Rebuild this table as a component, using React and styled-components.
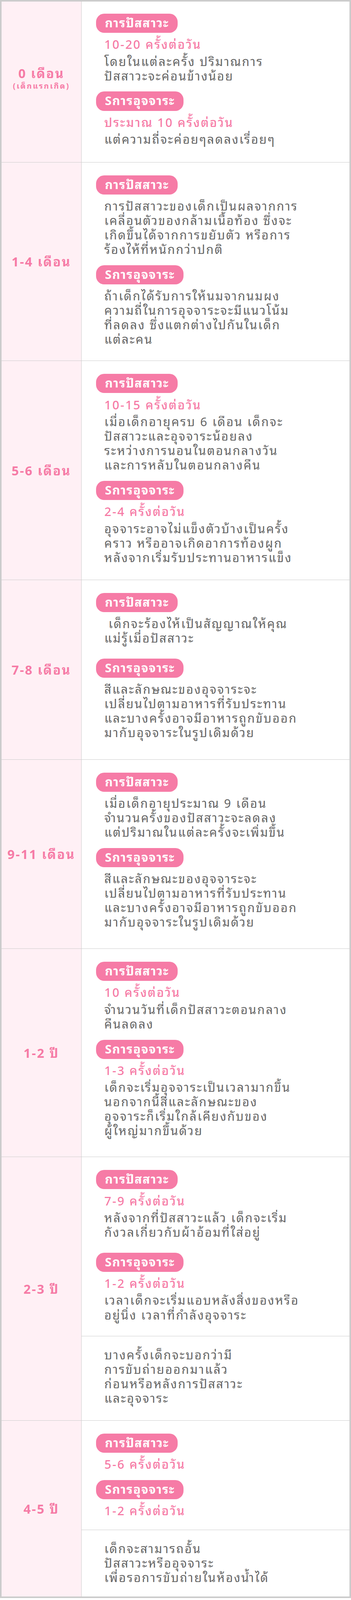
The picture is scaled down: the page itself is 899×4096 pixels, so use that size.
import React from "react";
import styled, { createGlobalStyle } from "styled-components";

// reference was laid out at 1280px, the page is drawn at 0.702 of that
const u = (n) => `${+(n * 0.702).toFixed(2)}px`;

const PINK = "#f67ba6";
const GREY_TEXT = "#666666";
const LINE = "#cccccc";

const GlobalStyle = createGlobalStyle`
  html, body {
    margin: 0;
    padding: 0;
    background: #fff;
  }
  body {
    font-family: "Noto Sans", "Noto Sans Thai Looped", sans-serif;
    letter-spacing: ${u(4)};
  }
`;

const Table = styled.div`
  border: ${u(6)} solid ${LINE};
  background: #fff;
`;

const Row = styled.div`
  display: grid;
  grid-template-columns: ${u(292)} 1fr;

  & + & {
    border-top: ${u(2)} solid ${LINE};
  }
`;

const Age = styled.div`
  background: #fff0f5;
  border-right: 1px solid ${LINE};
  display: flex;
  flex-direction: column;
  align-items: center;
  justify-content: center;
  color: ${PINK};
  font-weight: 700;
  text-align: center;
`;

const AgeMain = styled.div`
  font-size: ${u(46)};
  line-height: 1.2;
`;

const AgeSub = styled.div`
  font-size: ${u(28)};
  line-height: 1.2;
  margin: ${u(2)} 0 ${u(28)};
`;

const Cells = styled.div`
  display: flex;
  flex-direction: column;
`;

const Cell = styled.div`
  padding: ${({ $pt }) => u($pt)} ${u(40)} ${({ $pb }) => u($pb)} ${u(53)};

  & + & {
    border-top: ${u(2)} solid ${LINE};
  }
`;

const Section = styled.div`
  display: flex;
  flex-direction: column;
  align-items: flex-start;
  margin-top: ${({ $gap }) => u($gap)};
`;

const Badge = styled.div`
  height: ${u(70)};
  line-height: ${u(66)};
  padding: 0 ${u(32)};
  border-radius: ${u(30)};
  background: ${PINK};
  color: #fff;
  font-size: ${u(44)};
  font-weight: 700;
  letter-spacing: ${u(2.5)};
  white-space: nowrap;
`;

const Body = styled.div`
  margin: ${u(16)} 0 0 ${u(30)};
`;

const Count = styled.div`
  color: ${PINK};
  font-size: ${u(44)};
  font-weight: 500;
  line-height: 1.2;
  white-space: nowrap;
`;

const Note = styled.p`
  margin: 0;
  color: ${GREY_TEXT};
  font-size: ${u(44)};
  line-height: 1.2;
  white-space: nowrap;

  ${Count} + & {
    margin-top: ${u(9)};
  }
`;

const PEE = "การปัสสาวะ";
const POO = "Sการอุจจาระ";

const stoolColour = [
  "สีและลักษณะของอุจจาระจะ",
  "เปลี่ยนไปตามอาหารที่รับประทาน",
  "และบางครั้งอาจมีอาหารถูกขับออก",
  "มากับอุจจาระในรูปเดิมด้วย",
];

const rows = [
  {
    age: "0 เดือน",
    sub: "(เด็กแรกเกิด)",
    cells: [
      {
        pt: 44,
        pb: 56,
        sections: [
          {
            badge: PEE,
            count: "10-20 ครั้งต่อวัน",
            lines: ["โดยในแต่ละครั้ง ปริมาณการ", "ปัสสาวะจะค่อนข้างน้อย"],
          },
          {
            badge: POO,
            count: "ประมาณ 10 ครั้งต่อวัน",
            lines: ["แต่ความถี่จะค่อยๆลดลงเรื่อยๆ"],
          },
        ],
      },
    ],
  },
  {
    age: "1-4 เดือน",
    cells: [
      {
        pb: 51,
        sections: [
          {
            badge: PEE,
            lines: [
              "การปัสสาวะของเด็กเป็นผลจากการ",
              "เคลื่อนตัวของกล้ามเนื้อท้อง ซึ่งจะ",
              "เกิดขึ้นได้จากการขยับตัว หรือการ",
              "ร้องไห้ที่หนักกว่าปกติ",
            ],
          },
          {
            badge: POO,
            lines: [
              "ถ้าเด็กได้รับการให้นมจากนมผง",
              "ความถี่ในการอุจจาระจะมีแนวโน้ม",
              "ที่ลดลง ซึ่งแตกต่างไปกันในเด็ก",
              "แต่ละคน",
            ],
          },
        ],
      },
    ],
  },
  {
    age: "5-6 เดือน",
    cells: [
      {
        pb: 54,
        sections: [
          {
            badge: PEE,
            count: "10-15 ครั้งต่อวัน",
            lines: [
              "เมื่อเด็กอายุครบ 6 เดือน เด็กจะ",
              "ปัสสาวะและอุจจาระน้อยลง",
              "ระหว่างการนอนในตอนกลางวัน",
              "และการหลับในตอนกลางคืน",
            ],
          },
          {
            badge: POO,
            count: "2-4 ครั้งต่อวัน",
            lines: [
              "อุจจาระอาจไม่แข็งตัวบ้างเป็นครั้ง",
              "คราว หรืออาจเกิดอาการท้องผูก",
              "หลังจากเริ่มรับประทานอาหารแข็ง",
            ],
          },
        ],
      },
    ],
  },
  {
    age: "7-8 เดือน",
    cells: [
      {
        pb: 70,
        sections: [
          {
            badge: PEE,
            lines: ["\u00a0เด็กจะร้องไห้เป็นสัญญาณให้คุณ", "แม่รู้เมื่อปัสสาวะ"],
          },
          { badge: POO, gap: 48, lines: stoolColour },
        ],
      },
    ],
  },
  {
    age: "9-11 เดือน",
    cells: [
      {
        pb: 69,
        sections: [
          {
            badge: PEE,
            lines: [
              "เมื่อเด็กอายุประมาณ 9 เดือน",
              "จำนวนครั้งของปัสสาวะจะลดลง",
              "แต่ปริมาณในแต่ละครั้งจะเพิ่มขึ้น",
            ],
          },
          { badge: POO, lines: stoolColour },
        ],
      },
    ],
  },
  {
    age: "1-2 ปี",
    cells: [
      {
        pb: 68,
        sections: [
          {
            badge: PEE,
            count: "10 ครั้งต่อวัน",
            lines: ["จำนวนวันที่เด็กปัสสาวะตอนกลาง", "คืนลดลง"],
          },
          {
            badge: POO,
            count: "1-3 ครั้งต่อวัน",
            lines: [
              "เด็กจะเริ่มอุจจาระเป็นเวลามากขึ้น",
              "นอกจากนี้สีและลักษณะของ",
              "อุจจาระก็เริ่มใกล้เคียงกับของ",
              "ผู้ใหญ่มากขึ้นด้วย",
            ],
          },
        ],
      },
    ],
  },
  {
    age: "2-3 ปี",
    cells: [
      {
        pb: 51,
        sections: [
          {
            badge: PEE,
            count: "7-9 ครั้งต่อวัน",
            lines: ["หลังจากที่ปัสสาวะแล้ว เด็กจะเริ่ม", "กังวลเกี่ยวกับผ้าอ้อมที่ใส่อยู่"],
          },
          {
            badge: POO,
            gap: 48,
            count: "1-2 ครั้งต่อวัน",
            lines: ["เวลาเด็กจะเริ่มแอบหลังสิ่งของหรือ", "อยู่นิ่ง เวลาที่กำลังอุจจาระ"],
          },
        ],
      },
      {
        pt: 25,
        pb: 53,
        lines: [
          "บางครั้งเด็กจะบอกว่ามี",
          "การขับถ่ายออกมาแล้ว",
          "ก่อนหรือหลังการปัสสาวะ",
          "และอุจจาระ",
        ],
      },
    ],
  },
  {
    age: "4-5 ปี",
    cells: [
      {
        pb: 43,
        sections: [
          { badge: PEE, count: "5-6 ครั้งต่อวัน" },
          { badge: POO, count: "1-2 ครั้งต่อวัน" },
        ],
      },
      {
        pt: 25,
        pb: 43,
        lines: [
          "เด็กจะสามารถอั้น",
          "ปัสสาวะหรืออุจจาระ",
          "เพื่อรอการขับถ่ายในห้องน้ำได้",
        ],
      },
    ],
  },
];

const Lines = ({ lines }) => (
  <Note>
    {lines.map((line, i) => (
      <React.Fragment key={i}>
        {i > 0 && <br />}
        {line}
      </React.Fragment>
    ))}
  </Note>
);

const Block = ({ badge, count, lines, gap = 31, first }) => (
  <Section $gap={first ? 0 : gap}>
    <Badge>{badge}</Badge>
    <Body>
      {count && <Count>{count}</Count>}
      {lines && <Lines lines={lines} />}
    </Body>
  </Section>
);

export default function App() {
  return (
    <>
      <GlobalStyle />
      <Table lang="th">
        {rows.map((row) => (
          <Row key={row.age}>
            <Age>
              <AgeMain>{row.age}</AgeMain>
              {row.sub && <AgeSub>{row.sub}</AgeSub>}
            </Age>
            <Cells>
              {row.cells.map((cell, i) => (
                <Cell key={i} $pt={cell.pt ?? 47} $pb={cell.pb ?? 52}>
                  {cell.sections &&
                    cell.sections.map((s, j) => (
                      <Block key={j} first={j === 0} {...s} />
                    ))}
                  {cell.lines && (
                    <Body>
                      <Lines lines={cell.lines} />
                    </Body>
                  )}
                </Cell>
              ))}
            </Cells>
          </Row>
        ))}
      </Table>
    </>
  );
}
